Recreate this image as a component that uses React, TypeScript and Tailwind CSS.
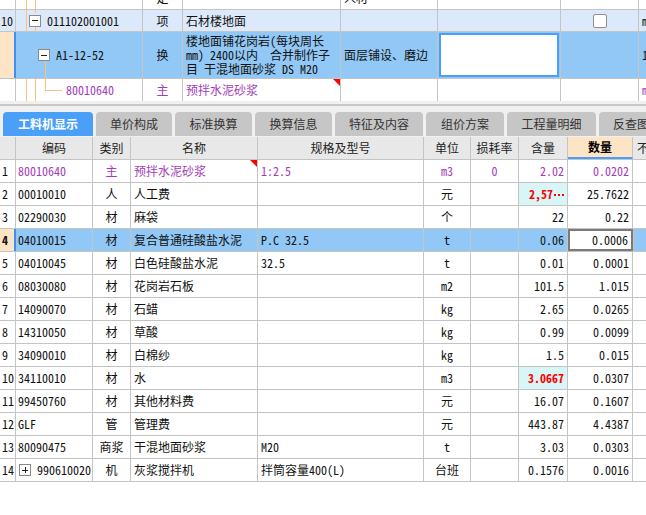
import React from 'react';

type Row = {
  n: number;
  code: string;
  cat: string;
  name: string;
  spec?: string;
  unit: string;
  loss?: string;
  qty: string;
  amt: string;
  purple?: boolean;
  tri?: boolean;
  redQty?: boolean;
  sel?: boolean;
  plus?: boolean;
  dots?: boolean;
};

const rows: Row[] = [
  { n: 1, code: '80010640', cat: '主', name: '预拌水泥砂浆', spec: '1:2.5', unit: 'm3', loss: '0', qty: '2.02', amt: '0.0202', purple: true, tri: true },
  { n: 2, code: '00010010', cat: '人', name: '人工费', unit: '元', qty: '2,57', amt: '25.7622', redQty: true, dots: true },
  { n: 3, code: '02290030', cat: '材', name: '麻袋', unit: '个', qty: '22', amt: '0.22' },
  { n: 4, code: '04010015', cat: '材', name: '复合普通硅酸盐水泥', spec: 'P.C 32.5', unit: 't', qty: '0.06', amt: '0.0006', sel: true },
  { n: 5, code: '04010045', cat: '材', name: '白色硅酸盐水泥', spec: '32.5', unit: 't', qty: '0.01', amt: '0.0001' },
  { n: 6, code: '08030080', cat: '材', name: '花岗岩石板', unit: 'm2', qty: '101.5', amt: '1.015' },
  { n: 7, code: '14090070', cat: '材', name: '石蜡', unit: 'kg', qty: '2.65', amt: '0.0265' },
  { n: 8, code: '14310050', cat: '材', name: '草酸', unit: 'kg', qty: '0.99', amt: '0.0099' },
  { n: 9, code: '34090010', cat: '材', name: '白棉纱', unit: 'kg', qty: '1.5', amt: '0.015' },
  { n: 10, code: '34110010', cat: '材', name: '水', unit: 'm3', qty: '3.0667', amt: '0.0307', redQty: true },
  { n: 11, code: '99450760', cat: '材', name: '其他材料费', unit: '元', qty: '16.07', amt: '0.1607' },
  { n: 12, code: 'GLF', cat: '管', name: '管理费', unit: '元', qty: '443.87', amt: '4.4387' },
  { n: 13, code: '80090475', cat: '商浆', name: '干混地面砂浆', spec: 'M20', unit: 't', qty: '3.03', amt: '0.0303' },
  { n: 14, code: '990610020', cat: '机', name: '灰浆搅拌机', spec: '拌筒容量400(L)', unit: '台班', qty: '0.1576', amt: '0.0016', plus: true },
];

const tabs = [
  { t: '工料机显示', w: 'w-[90px]', active: true },
  { t: '单价构成', w: 'w-[76px]' },
  { t: '标准换算', w: 'w-[77px]' },
  { t: '换算信息', w: 'w-[77px]' },
  { t: '特征及内容', w: 'w-[88px]' },
  { t: '组价方案', w: 'w-[78px]' },
  { t: '工程量明细', w: 'w-[89px]' },
  { t: '反查图形工程量', w: 'w-[80px]' },
];

function Tri() {
  return (
    <svg className="absolute right-0 top-0" width="7" height="7" viewBox="0 0 7 7">
      <polygon points="0,0 7,0 7,7" fill="#ff0000" />
    </svg>
  );
}

function TreeBox({ plus }: { plus?: boolean }) {
  return (
    <span className="relative inline-block w-[12px] h-[12px] border border-[#8a8a8a] bg-white shrink-0">
      <span className="absolute left-[2px] top-[4.5px] w-[6px] h-[1px] bg-[#222]" />
      {plus && <span className="absolute left-[4.5px] top-[2px] w-[1px] h-[6px] bg-[#222]" />}
    </span>
  );
}

const ORANGE = 'bg-[#fbc07e]';

export default function App() {
  return (
    <div className="w-[646px] h-[515px] bg-white overflow-hidden text-[12px] text-[#111] font-['Noto_Sans_Mono_CJK_SC','Noto_Sans_CJK_SC',monospace]">
      {/* Upper grid */}
      <div className="flex flex-col">
        {/* partial top row */}
        <div className="flex h-[10px] border-b border-[#c4c4c4] overflow-hidden">
          <div className="w-[16px] shrink-0 border-r border-[#c4c4c4]" />
          <div className="w-[127px] shrink-0 border-r border-[#c4c4c4] relative">
            <span className={`absolute left-[10px] top-0 bottom-[-1px] w-[1px] ${ORANGE}`} />
            <span className={`absolute left-[19px] top-0 bottom-[-1px] w-[1px] ${ORANGE}`} />
          </div>
          <div className="w-[40px] shrink-0 border-r border-[#c4c4c4] flex justify-center overflow-hidden">
            <div className="mt-[-8px] leading-[12px]">定</div>
          </div>
          <div className="w-[158px] shrink-0 border-r border-[#c4c4c4]" />
          <div className="w-[97px] shrink-0 border-r border-[#c4c4c4] overflow-hidden pl-[3px]">
            <div className="mt-[-8px] leading-[12px]">人材</div>
          </div>
          <div className="w-[123px] shrink-0 border-r border-[#c4c4c4]" />
          <div className="w-[78px] shrink-0 border-r border-[#c4c4c4]" />
          <div className="flex-1" />
        </div>

        {/* row 10 */}
        <div className="flex h-[22px] border-b border-[#c4c4c4] bg-[#dce9fb]">
          <div className="w-[16px] shrink-0 border-r border-[#c4c4c4] flex items-center pl-[1px]">10</div>
          <div className="w-[127px] shrink-0 border-r border-[#c4c4c4] relative flex items-center">
            <span className={`absolute left-[10px] top-0 bottom-[-1px] w-[1px] ${ORANGE}`} />
            <span className={`absolute left-[19px] top-0 h-[3px] w-[1px] ${ORANGE}`} />
            <span className={`absolute left-[19px] top-[15px] bottom-[-1px] w-[1px] ${ORANGE}`} />
            <span className="ml-[13px] flex items-center">
              <TreeBox />
            </span>
            <span className="ml-[6px]">011102001001</span>
          </div>
          <div className="w-[40px] shrink-0 border-r border-[#c4c4c4] flex items-center justify-center">项</div>
          <div className="w-[158px] shrink-0 border-r border-[#c4c4c4] flex items-center pl-[3px]">石材楼地面</div>
          <div className="w-[97px] shrink-0 border-r border-[#c4c4c4]" />
          <div className="w-[123px] shrink-0 border-r border-[#c4c4c4]" />
          <div className="w-[78px] shrink-0 border-r border-[#c4c4c4] flex items-center justify-center">
            <span className="w-[14px] h-[14px] rounded-[2px] border border-[#8f8f8f] bg-white" />
          </div>
          <div className="flex-1 overflow-hidden pl-[3px] flex items-center">m3</div>
        </div>

        {/* row sub (selected) */}
        <div className="flex h-[47px] border-b border-[#c4c4c4] bg-[#92c8f5]">
          <div className="w-[16px] shrink-0 bg-[#fde4c5] border-r-2 border-[#3d8ef5]" />
          <div className="w-[127px] shrink-0 border-r border-[#c4c4c4] relative flex items-center">
            <span className={`absolute left-[29px] top-[28px] bottom-[-1px] w-[1px] ${ORANGE}`} />
            <span className="ml-[22px] flex items-center">
              <TreeBox />
            </span>
            <span className="ml-[6px]">A1-12-52</span>
          </div>
          <div className="w-[40px] shrink-0 border-r border-[#c4c4c4] flex items-center justify-center">换</div>
          <div className="w-[158px] shrink-0 border-r border-[#c4c4c4] overflow-hidden pl-[3px] pt-[2px] leading-[14px] whitespace-nowrap">
            <div>楼地面铺花岗岩(每块周长</div>
            <div>mm) 2400以内　合并制作子</div>
            <div>目 干混地面砂浆 DS M20</div>
          </div>
          <div className="w-[97px] shrink-0 border-r border-[#c4c4c4] flex items-center pl-[3px] whitespace-nowrap overflow-hidden">面层铺设、磨边</div>
          <div className="w-[123px] shrink-0 border-r border-[#c4c4c4] p-[1px]">
            <div className="w-full h-full bg-white border-2 border-[#4a9ff8]" />
          </div>
          <div className="w-[78px] shrink-0 border-r border-[#c4c4c4]" />
          <div className="flex-1 overflow-hidden pl-[3px] flex items-center">1</div>
        </div>

        {/* row main material */}
        <div className="flex h-[22px] bg-white">
          <div className="w-[16px] shrink-0 border-r border-[#c4c4c4]" />
          <div className="w-[127px] shrink-0 border-r border-[#c4c4c4] relative flex items-center">
            <span className={`absolute left-[10px] top-0 bottom-0 w-[1px] ${ORANGE}`} />
            <span className={`absolute left-[19px] top-0 bottom-0 w-[1px] ${ORANGE}`} />
            <span className={`absolute left-[29px] top-0 h-[11px] w-[1px] ${ORANGE}`} />
            <span className={`absolute left-[29px] top-[11px] h-[1px] w-[17px] ${ORANGE}`} />
            <span className="ml-[50px] text-[#a23cb8]">80010640</span>
          </div>
          <div className="w-[40px] shrink-0 border-r border-[#c4c4c4] flex items-center justify-center text-[#a23cb8]">主</div>
          <div className="w-[158px] shrink-0 border-r border-[#c4c4c4] relative flex items-center pl-[3px] text-[#a23cb8]">
            预拌水泥砂浆
            <Tri />
          </div>
          <div className="w-[97px] shrink-0 border-r border-[#c4c4c4]" />
          <div className="w-[123px] shrink-0 border-r border-[#c4c4c4]" />
          <div className="w-[78px] shrink-0 border-r border-[#c4c4c4]" />
          <div className="flex-1 overflow-hidden pl-[3px] flex items-center text-[#a23cb8]">m3</div>
        </div>
      </div>

      {/* separator */}
      <div className="h-[3px] bg-[#f0f0f0]" />
      <div className="h-[2px] bg-[#c8c8c8]" />
      <div className="h-[6px] bg-[#f0f0f0]" />

      {/* tabs */}
      <div className="h-[25px] bg-[#f0f0f0] flex items-start pl-[3px] gap-[3px] overflow-hidden font-['Noto_Sans_CJK_SC',sans-serif] text-[12px]">
        {tabs.map((t) => (
          <div
            key={t.t}
            className={`${t.w} shrink-0 h-[24px] rounded-t-[4px] flex items-center justify-center whitespace-nowrap overflow-hidden ${
              t.active ? 'bg-[#4a9ff8] text-white font-bold' : 'bg-[#c6c6c6] text-[#333]'
            } ${t.w === 'w-[80px]' ? 'justify-start pl-[14px]' : ''}`}
          >
            {t.t}
          </div>
        ))}
      </div>

      {/* header */}
      <div className="flex h-[23px] border-b border-[#c4c4c4] bg-[#e8e8e8] font-['Noto_Sans_CJK_SC',sans-serif] text-[#222]">
        <div className="w-[16px] shrink-0 border-r border-[#c4c4c4]" />
        <div className="w-[77px] shrink-0 border-r border-[#c4c4c4] flex items-center justify-center">编码</div>
        <div className="w-[38px] shrink-0 border-r border-[#c4c4c4] flex items-center justify-center">类别</div>
        <div className="w-[127px] shrink-0 border-r border-[#c4c4c4] flex items-center justify-center">名称</div>
        <div className="w-[166px] shrink-0 border-r border-[#c4c4c4] flex items-center justify-center">规格及型号</div>
        <div className="w-[47px] shrink-0 border-r border-[#c4c4c4] flex items-center justify-center">单位</div>
        <div className="w-[48px] shrink-0 border-r border-[#c4c4c4] flex items-center justify-center">损耗率</div>
        <div className="w-[49px] shrink-0 border-r border-[#c4c4c4] flex items-center justify-center">含量</div>
        <div className="w-[65px] shrink-0 border-r border-[#c4c4c4] bg-[#fde4c5] border-b-2 border-b-[#4a9ff8] flex items-center justify-center font-bold text-black">数量</div>
        <div className="flex-1 overflow-hidden flex items-center pl-[4px]">不</div>
      </div>

      {/* data rows */}
      {rows.map((r) => {
        const txt = r.purple ? 'text-[#a23cb8]' : '';
        return (
          <div key={r.n} className={`flex h-[23px] border-b border-[#c4c4c4] ${r.sel ? 'bg-[#92c8f5]' : 'bg-white'}`}>
            <div
              className={`w-[16px] shrink-0 flex items-center pl-[2px] ${
                r.sel ? 'bg-[#fde4c5] border-r-2 border-[#3d8ef5] font-bold' : 'border-r border-[#c4c4c4]'
              } ${r.n >= 10 ? 'pl-[0px]' : ''}`}
            >
              {r.n}
            </div>
            <div className={`w-[77px] shrink-0 border-r border-[#c4c4c4] flex items-center pl-[2px] gap-[6px] ${txt}`}>
              {r.plus && (
                <span className="ml-[1px] flex items-center">
                  <TreeBox plus />
                </span>
              )}
              <span>{r.code}</span>
            </div>
            <div className={`w-[38px] shrink-0 border-r border-[#c4c4c4] flex items-center justify-center ${txt}`}>{r.cat}</div>
            <div className={`w-[127px] shrink-0 border-r border-[#c4c4c4] relative flex items-center pl-[3px] whitespace-nowrap overflow-hidden ${txt}`}>
              {r.name}
              {r.tri && <Tri />}
            </div>
            <div className={`w-[166px] shrink-0 border-r border-[#c4c4c4] flex items-center pl-[3px] whitespace-nowrap overflow-hidden ${txt}`}>
              {r.spec ?? ''}
            </div>
            <div className={`w-[47px] shrink-0 border-r border-[#c4c4c4] flex items-center justify-center ${txt}`}>{r.unit}</div>
            <div className={`w-[48px] shrink-0 border-r border-[#c4c4c4] flex items-center justify-center ${txt}`}>{r.loss ?? ''}</div>
            <div
              className={`w-[49px] shrink-0 border-r border-[#c4c4c4] flex items-center justify-end pr-[3px] whitespace-nowrap overflow-hidden ${
                r.redQty ? 'bg-[#d9f6f6] text-[#ff0000] font-bold' : txt
              }`}
            >
              {r.qty}
              {r.dots && (
                <span className="flex items-center gap-[2px] ml-[1px] h-[12px] pt-[2px]">
                  <span className="w-[2px] h-[2px] bg-[#ff0000]" />
                  <span className="w-[2px] h-[2px] bg-[#ff0000]" />
                  <span className="w-[2px] h-[2px] bg-[#ff0000]" />
                </span>
              )}
            </div>
            <div
              className={`w-[65px] shrink-0 flex items-center justify-end pr-[3px] ${
                r.sel ? 'bg-white border-2 border-[#7a7a7a] pr-[2px]' : 'border-r border-[#c4c4c4]'
              } ${txt}`}
            >
              {r.amt}
            </div>
            <div className={`flex-1 ${r.sel ? 'border-l border-[#c4c4c4]' : ''}`} />
          </div>
        );
      })}
    </div>
  );
}
